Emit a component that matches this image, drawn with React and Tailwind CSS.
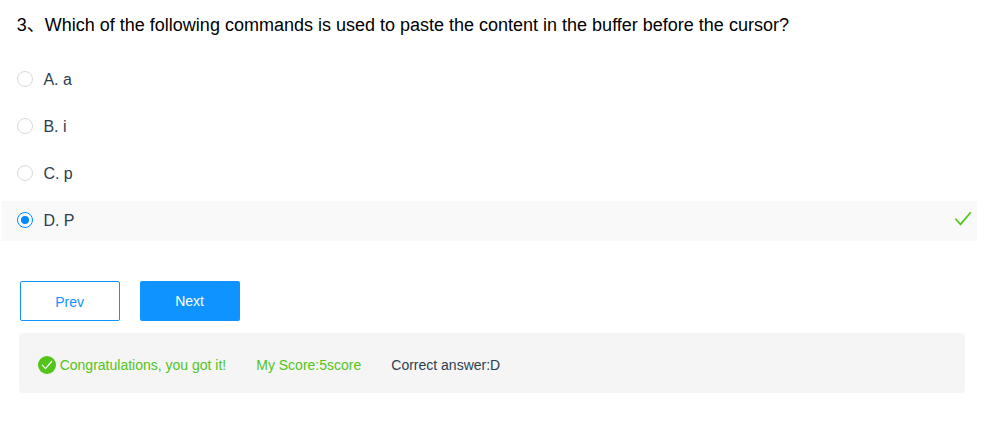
const options = [
  { key: 'A', text: 'a' },
  { key: 'B', text: 'i' },
  { key: 'C', text: 'p' },
  { key: 'D', text: 'P', selected: true },
];

function Radio({ checked }) {
  return (
    <span
      className={
        checked
          ? 'mb-0.5 flex size-4 items-center justify-center rounded-full border border-[#0089ff] bg-white'
          : 'mb-0.5 size-4 rounded-full border border-[#d9d9d9] bg-white'
      }
    >
      {checked && <span className="size-2 rounded-full bg-[#0089ff]" />}
    </span>
  );
}

function Option({ option }) {
  return (
    <li
      className={
        option.selected
          ? 'flex h-10 items-center bg-[#f9f9f9] pr-[5px] pl-[15px]'
          : 'flex h-10 items-center pr-[5px] pl-[15px]'
      }
    >
      <Radio checked={option.selected} />
      <span className="ml-[10.4px] text-base leading-10 text-[#2c3e50]">
        {option.key}. {option.text}
      </span>
      {option.selected && (
        <svg className="mb-1 ml-auto h-4 w-[18px]" viewBox="0 0 18 16" fill="none" stroke="#52c41a" strokeWidth="1.7">
          <path d="M1.4 7.8L6.5 13.4L16.8 1.2" />
        </svg>
      )}
    </li>
  );
}

export default function App() {
  return (
    <main className="h-[425px] w-[998px] overflow-hidden bg-white font-['Liberation_Sans','Noto_Sans_CJK_SC',sans-serif]">
      <h1 className="pt-2.5 pl-[16.8px] text-lg leading-[30px] text-black">
        3、Which of the following commands is used to paste the content in the buffer before the cursor?
      </h1>
      <ul className="mt-5 mr-[21px] ml-0.5 flex flex-col gap-[7px]">
        {options.map((option) => (
          <Option key={option.key} option={option} />
        ))}
      </ul>
      <div className="mt-10 ml-5 flex gap-5 text-sm">
        <button className="h-10 w-[100px] rounded-[2px] border border-[#0f93ff] pt-0.5 pr-[0.8px] text-[#0f93ff]">Prev</button>
        <button className="h-10 w-[100px] rounded-[2px] bg-[#0f93ff] pr-[0.8px] text-white">Next</button>
      </div>
      <div className="mt-3 mr-[33px] ml-[19px] flex h-[60px] items-center rounded bg-[#f5f5f5] pt-1 pl-[19px] text-sm">
        <svg className="mr-[3.7px] size-[18px]" viewBox="0 0 18 18" fill="none">
          <circle cx="9" cy="9" r="9" fill="#52c41a" />
          <path d="M4 8.8L7.5 12.6L14 5" stroke="white" strokeWidth="1.2" />
        </svg>
        <span className="text-[#52c41a]">Congratulations, you got it!</span>
        <span className="ml-[30px] text-[#52c41a]">My Score:5score</span>
        <span className="ml-[30px] text-[#2c3e50]">Correct answer:D</span>
      </div>
    </main>
  );
}
